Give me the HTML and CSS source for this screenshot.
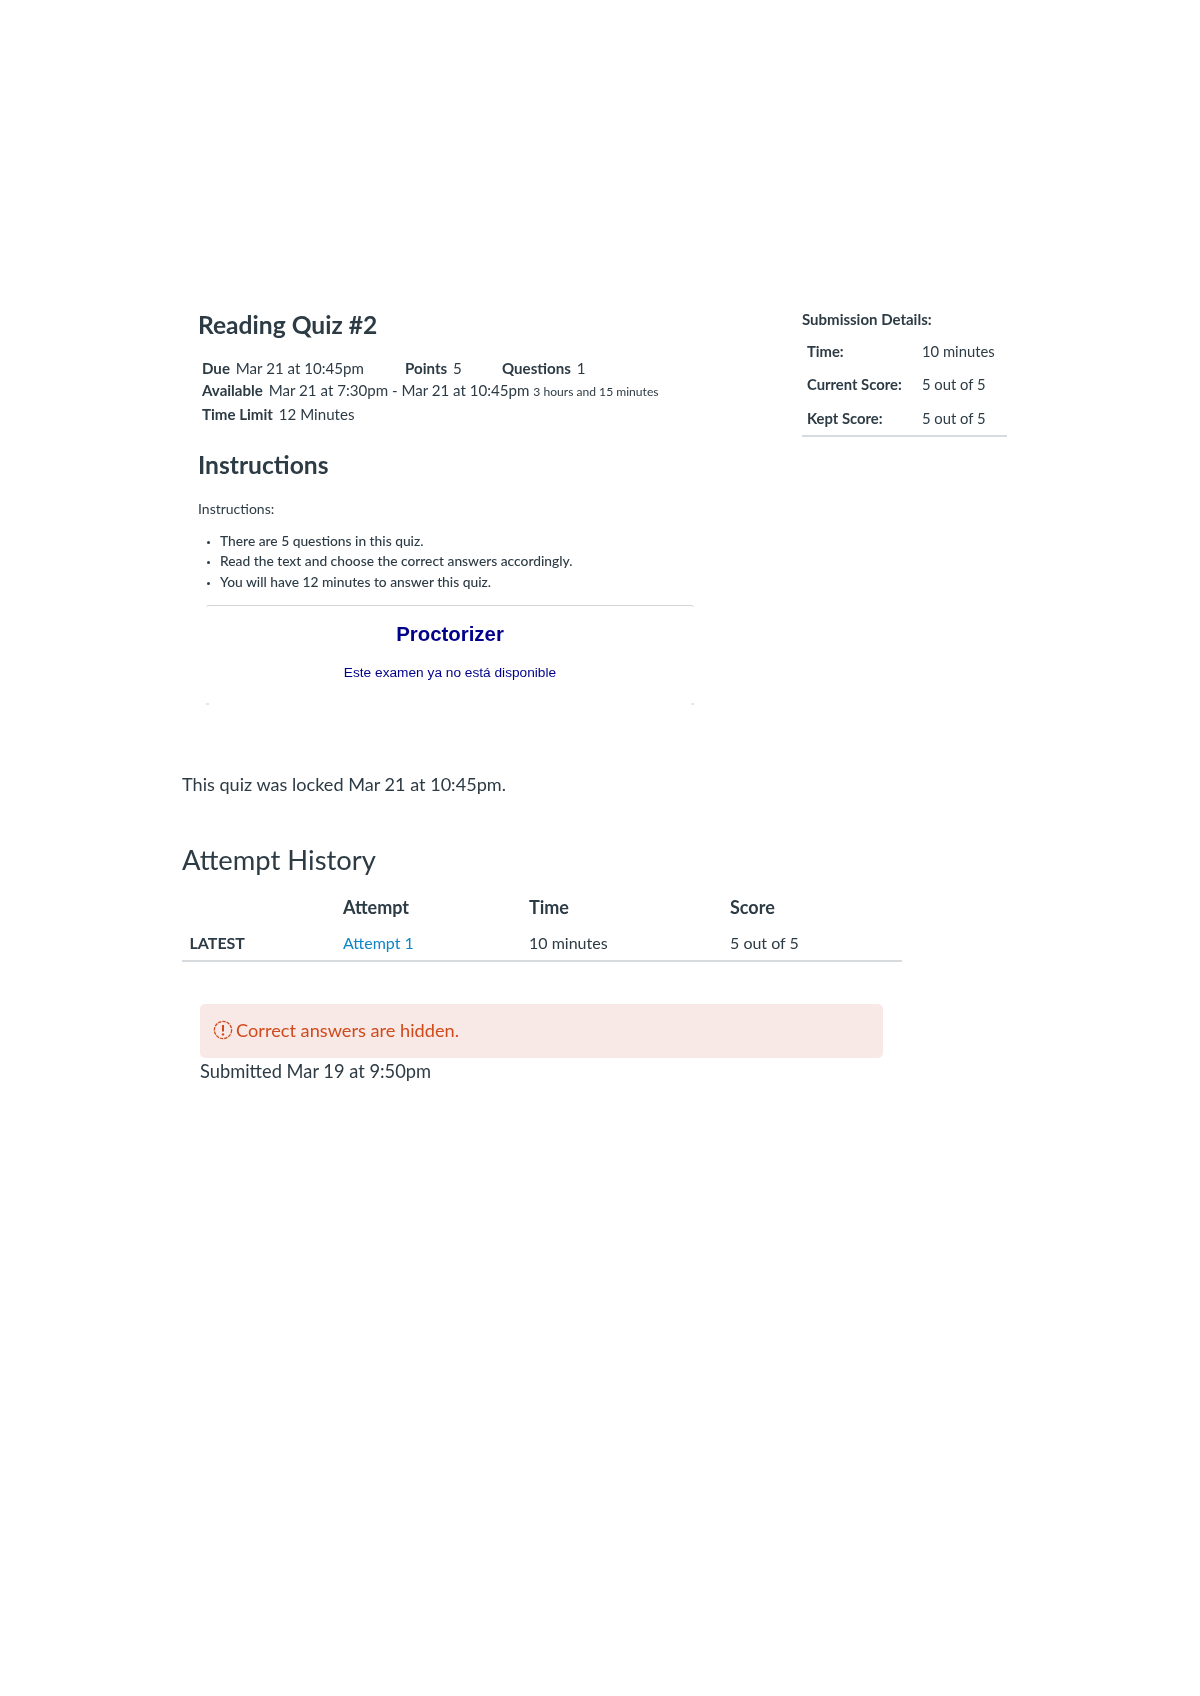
FILE: index.html
```html
<!DOCTYPE html>
<html lang="en">
<head>
<meta charset="utf-8">
<title>Reading Quiz #2</title>
<link rel="stylesheet" href="styles.css">
</head>
<body>
<main class="page">
  <section class="top">
    <div class="quiz">
      <h1 class="title">Reading Quiz #2</h1>
      <div class="meta">
        <div class="meta-row">
          <span class="meta-item meta-due"><b>Due</b> Mar 21 at 10:45pm</span>
          <span class="meta-item meta-points"><b>Points</b> 5</span>
          <span class="meta-item"><b>Questions</b> 1</span>
        </div>
        <div class="meta-row"><span class="meta-item"><b>Available</b> Mar 21 at 7:30pm - Mar 21 at 10:45pm <small class="meta-small">3 hours and 15 minutes</small></span></div>
        <div class="meta-row"><span class="meta-item"><b>Time Limit</b> 12 Minutes</span></div>
      </div>
      <h2 class="subtitle">Instructions</h2>
      <p class="intro">Instructions:</p>
      <ul class="rules">
        <li>There are 5 questions in this quiz.</li>
        <li>Read the text and choose the correct answers accordingly.</li>
        <li>You will have 12 minutes to answer this quiz.</li>
      </ul>
      <div class="frame">
        <h3 class="frame-title">Proctorizer</h3>
        <p class="frame-text">Este examen ya no está disponible</p>
      </div>
    </div>
    <aside class="details">
      <h4 class="details-title">Submission Details:</h4>
      <dl class="details-list">
        <div class="details-row"><dt>Time:</dt><dd>10 minutes</dd></div>
        <div class="details-row"><dt>Current Score:</dt><dd>5 out of 5</dd></div>
        <div class="details-row"><dt>Kept Score:</dt><dd>5 out of 5</dd></div>
      </dl>
    </aside>
  </section>
  <section class="lower">
    <p class="locked">This quiz was locked Mar 21 at 10:45pm.</p>
    <h2 class="history-title">Attempt History</h2>
    <div class="history">
      <div class="history-row history-head">
        <span></span><span>Attempt</span><span>Time</span><span>Score</span>
      </div>
      <div class="history-row history-body">
        <span class="latest">LATEST</span><a class="attempt" href="#">Attempt 1</a><span>10 minutes</span><span>5 out of 5</span>
      </div>
    </div>
    <div class="result">
      <div class="alert">
        <svg class="alert-icon" viewBox="0 0 20 20" aria-hidden="true">
          <circle cx="10" cy="10" r="8.6" fill="none" stroke="currentColor" stroke-width="1.3" stroke-dasharray="3.4 1"/>
          <path d="M10 5v6.6" fill="none" stroke="currentColor" stroke-width="2"/>
          <circle cx="10" cy="14.4" r="1.2" fill="currentColor"/>
        </svg>
        <span>Correct answers are hidden.</span>
      </div>
      <p class="submitted">Submitted Mar 19 at 9:50pm</p>
    </div>
  </section>
</main>
</body>
</html>
```

FILE: styles.css
```css
* { box-sizing: border-box; }
html, body { margin: 0; padding: 0; background: #fff; }
body { font-family: Lato, "Open Sans", sans-serif; color: #2d3b45; }
.page { width: 1200px; height: 1696px; padding-top: 310px; filter: blur(0.45px); }

.top { display: flex; align-items: flex-start; padding-left: 198px; }
.quiz { width: 604px; }
.title { margin: 0; font-size: 24.6px; line-height: 30px; font-weight: 700; }
.meta { margin: 17px 0 0 4px; font-size: 15.1px; line-height: 22px; }
.meta-row { display: flex; white-space: nowrap; }
.meta b { font-weight: 700; margin-right: 2px; }
.meta-due { width: 203px; }
.meta-points { width: 97px; }
.meta-small { font-size: 12.1px; }
.subtitle { margin: 25px 0 0; font-size: 24.6px; line-height: 30px; font-weight: 700; }
.intro { margin: 21px 0 0; font-size: 14px; line-height: 16px; }
.rules { margin: 13.5px 0 0; padding: 0 0 0 22px; font-size: 13.8px; line-height: 20.7px; font-weight: 500; }
.rules li::marker { font-size: 9px; }
.frame { position: relative; margin: 12px 0 0 8px; width: 488px; height: 100px; border-top: 1px solid #d4d4d4; border-radius: 3px; text-align: center; font-family: "Liberation Sans", Arial, sans-serif; color: #00008b; }
.frame::before, .frame::after { content: ""; position: absolute; bottom: 0; width: 3px; height: 2px; background: #e6e6e6; }
.frame::before { left: 0; }
.frame::after { right: 0; }
.frame-title { margin: 16px 0 0; font-size: 20.4px; line-height: 24px; font-weight: 700; }
.frame-text { margin: 19px 0 0; font-size: 13.7px; line-height: 16px; }

.details { width: 205px; font-size: 14.8px; }
.details-title { margin: 0; font-size: 15px; line-height: 18px; font-weight: 700; }
.details-list { margin: 0; padding: 6px 5px 0; border-bottom: 2px solid #d7dbde; }
.details-row { display: flex; height: 33.6px; align-items: center; }
.details-row dt { width: 115px; font-weight: 700; }
.details-row dd { margin: 0; }

.lower { margin-top: 67px; padding-left: 182px; font-size: 16px; }
.locked { margin: 0; font-size: 18.1px; line-height: 24px; }
.history-title { margin: 47px 0 0; font-size: 27.4px; line-height: 34px; font-weight: 400; }
.history { width: 720px; margin-top: 12px; border-bottom: 2px solid #d7dbde; }
.history-row { display: grid; grid-template-columns: 161px 186px 201px 1fr; }
.history-head { height: 37px; align-items: center; font-size: 18px; font-weight: 700; }
.history-body { height: 34px; align-items: center; font-size: 16px; }
.latest { padding-left: 7.5px; font-weight: 700; }
.attempt { color: #0e86c9; text-decoration: none; }
.result { width: 683px; margin: 42px 0 0 18px; }
.alert { display: flex; align-items: center; gap: 3px; height: 54px; padding: 0 0 1px 13px; border-radius: 5px; background: #f9e9e6; color: #cf4a1c; font-size: 18.2px; }
.alert-icon { width: 20px; height: 20px; flex: none; }
.submitted { margin: 1px 0 0; font-size: 18.3px; line-height: 24px; }
```
